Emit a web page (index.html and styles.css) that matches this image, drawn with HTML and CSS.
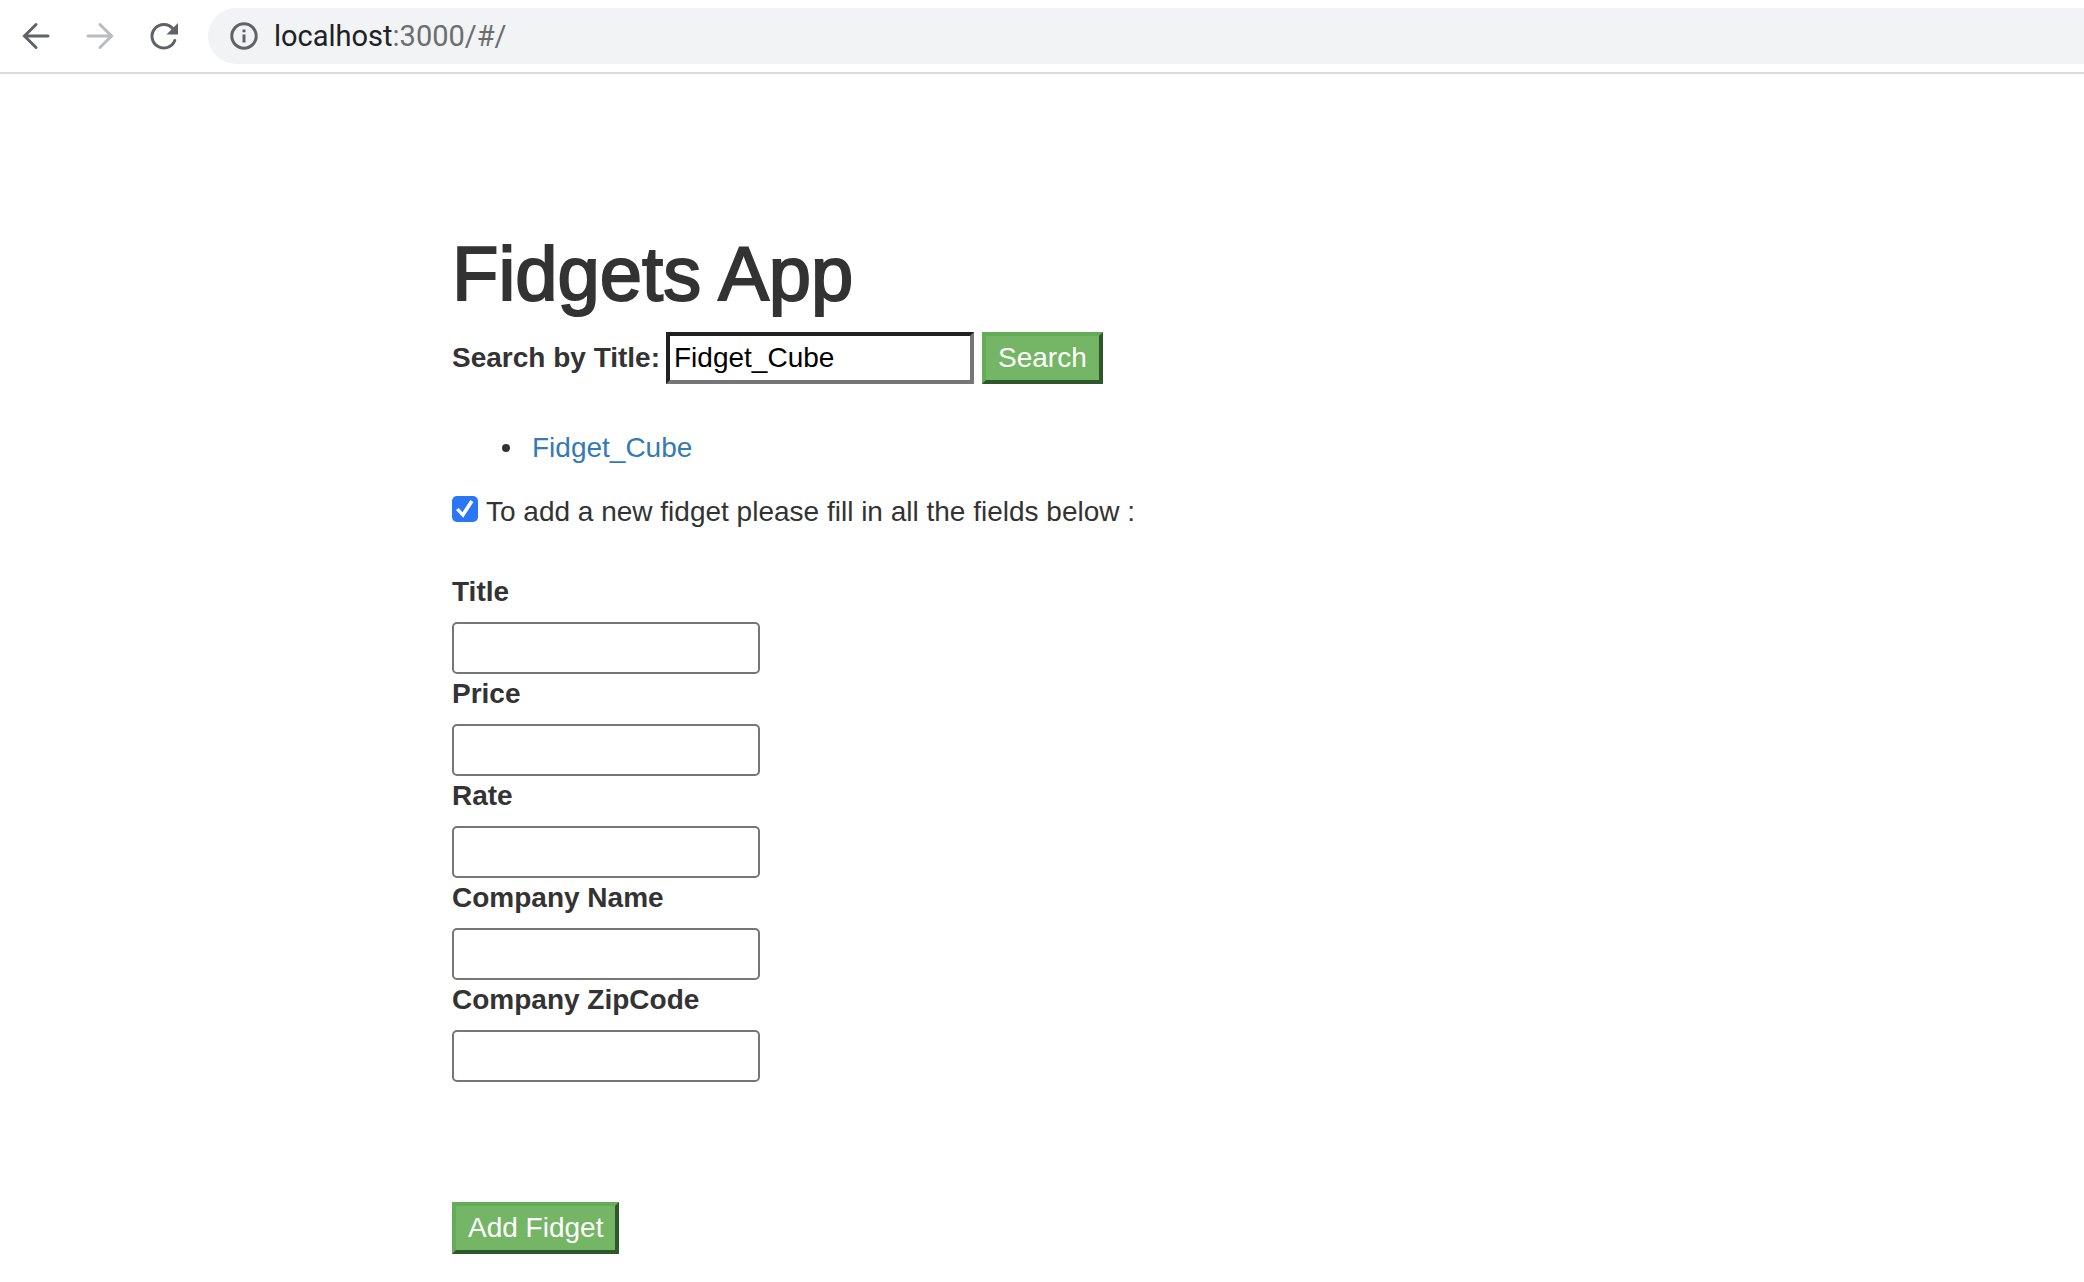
FILE: index.html
```html
<!DOCTYPE html>
<html lang="en">
<head>
<meta charset="utf-8">
<title>Fidgets App</title>
<link rel="stylesheet" href="styles.css">
</head>
<body>
<header class="toolbar">
  <nav class="nav">
    <button class="nav-button" type="button" aria-label="Back">
      <svg class="icon" viewBox="0 0 40 40"><path d="M20 8.500L8.500 20L20 31.500M9 20H32"/></svg>
    </button>
    <button class="nav-button nav-button-off" type="button" aria-label="Forward" disabled>
      <svg class="icon" viewBox="0 0 40 40"><path d="M20 8.500L31.500 20L20 31.500M31 20H8"/></svg>
    </button>
    <button class="nav-button" type="button" aria-label="Reload">
      <svg class="icon" viewBox="0 0 40 40"><path d="M30.800 24.500A11.800 11.800 0 1 1 29 12.800"/><path class="solid" d="M34 7V18.500H22.500Z"/></svg>
    </button>
  </nav>
  <div class="address">
    <svg class="info" viewBox="0 0 28 28"><circle cx="14" cy="14" r="12.200"/><path d="M14 12.500V20.500M14 7.500V10.200"/></svg>
    <div class="url" role="textbox" aria-label="Address"><span class="host">localhost</span>:3000/#/</div>
  </div>
</header>
<main class="container">
  <h1 class="heading">Fidgets App</h1>
  <form class="search">
    <label class="label" for="search">Search by Title:</label>
    <input class="search-box" id="search" type="text" value="Fidget_Cube">
    <button class="button" type="submit">Search</button>
  </form>
  <ul class="results">
    <li class="result"><a class="link" href="#/fidget">Fidget_Cube</a></li>
  </ul>
  <form class="add-form">
    <label class="toggle"><input class="check" type="checkbox" checked>To add a new fidget please fill in all the fields below :</label>
    <div class="fields">
      <label class="label" for="title">Title</label>
      <input class="field" id="title" type="text">
      <label class="label" for="price">Price</label>
      <input class="field" id="price" type="text">
      <label class="label" for="rate">Rate</label>
      <input class="field" id="rate" type="text">
      <label class="label" for="company">Company Name</label>
      <input class="field" id="company" type="text">
      <label class="label" for="zip">Company ZipCode</label>
      <input class="field" id="zip" type="text">
    </div>
    <button class="button" type="submit">Add Fidget</button>
  </form>
</main>
</body>
</html>
```
FILE: styles.css
```css
* {
  box-sizing: border-box;
}

body {
  margin: 0;
  background: #fff;
  color: #333;
  font: 28px/40px "Liberation Sans", Arial, sans-serif;
}

.toolbar {
  display: flex;
  align-items: center;
  gap: 24px;
  padding: 8px 0 8px 16px;
  border-bottom: 2px solid #dadce0;
}

.nav {
  display: flex;
  gap: 24px;
}

.nav-button {
  width: 40px;
  height: 40px;
  padding: 0;
  border: 0;
  background: none;
  color: #5f6368;
}

.nav-button-off {
  color: #babcbe;
}

.icon,
.info {
  display: block;
  fill: none;
  stroke: currentColor;
  stroke-width: 3;
}

.icon {
  stroke-linecap: round;
}

.solid {
  fill: currentColor;
  stroke: none;
}

.address {
  flex: 1;
  display: flex;
  align-items: center;
  gap: 16px;
  height: 56px;
  padding-left: 22px;
  border-radius: 28px 0 0 28px;
  background: #f1f3f4;
  color: #5f6368;
}

.info {
  width: 28px;
  height: 28px;
}

.url {
  font-family: Roboto, sans-serif;
  font-size: 29px;
  color: #6b6e71;
}

.host {
  color: #202124;
}

.container {
  max-width: 1180px;
  margin: 0 auto;
  padding: 160px 0 28px;
}

.heading {
  margin: 0 0 18px;
  font-size: 76px;
  font-weight: 400;
  line-height: 80px;
  -webkit-text-stroke: 2px #333;
}

.search {
  display: flex;
  align-items: center;
  gap: 8px;
}

.label {
  font-weight: 700;
}

.search .label {
  margin-right: -2px;
}

.search-box {
  width: 308px;
  height: 52px;
  padding: 2px 4px;
  border: 4px solid;
  border-color: #212121 #767676 #767676 #212121;
  color: #000;
  font: inherit;
}

.button {
  height: 52px;
  padding: 0 12px;
  border: 4px solid;
  border-color: #65ac58 #30572b #30572b #65ac58;
  background: #74b566;
  color: #fff;
  font: inherit;
}

.results {
  margin: 44px 0 24px;
  padding-left: 50px;
  list-style: none;
}

.result {
  display: flex;
  align-items: center;
  gap: 22px;
}

.result::before {
  content: "";
  width: 8px;
  height: 8px;
  border-radius: 50%;
  background: #333;
}

.link {
  color: #337ab7;
  text-decoration: none;
}

.add-form {
  display: flex;
  flex-direction: column;
  align-items: flex-start;
}

.toggle {
  display: flex;
  gap: 8px;
}

.check {
  appearance: none;
  width: 26px;
  height: 26px;
  margin: 4px 0 0;
  border-radius: 5px;
  background: #2a76f6;
  display: grid;
  place-items: center;
}

.check:checked::before {
  content: "";
  width: 18px;
  height: 18px;
  background: #fff;
  clip-path: polygon(0 56%, 14% 44%, 36% 68%, 80% 0, 97% 11%, 40% 98%);
}

.fields {
  display: flex;
  flex-direction: column;
  align-items: flex-start;
  margin: 40px 0 120px;
}

.field {
  width: 308px;
  height: 52px;
  margin: 10px 0 0;
  padding: 2px 6px;
  border: 2px solid #767676;
  border-radius: 5px;
  background: #fff;
  font: inherit;
}
```
